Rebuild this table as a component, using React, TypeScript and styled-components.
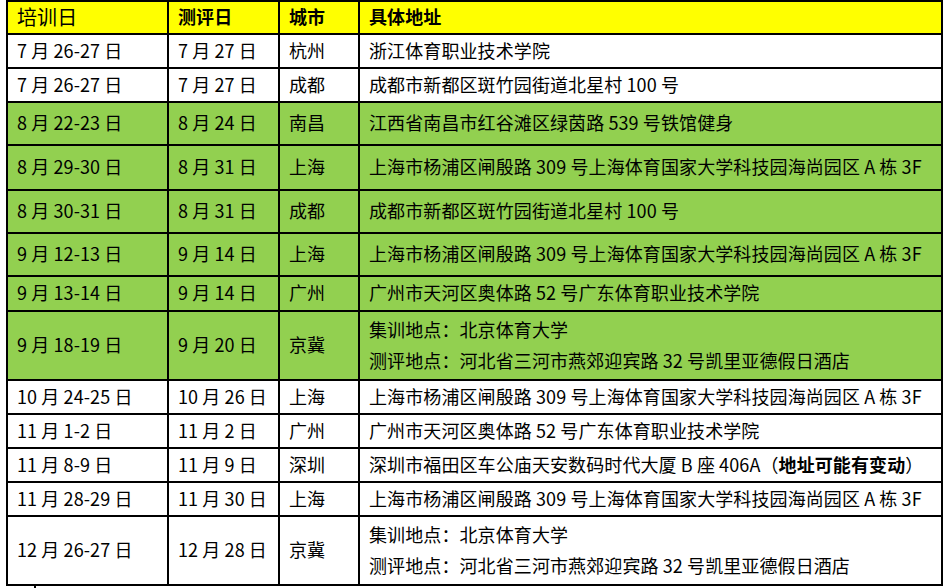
import React from "react";
import styled, { createGlobalStyle } from "styled-components";

const GlobalStyle = createGlobalStyle`
  html, body {
    margin: 0;
    padding: 0;
    background: #fff;
  }
  body {
    font-family: "Noto Sans CJK SC", "Noto Sans", sans-serif;
    color: #000;
  }
`;

const Page = styled.div`
  padding-left: 6px;
  width: 948px;
  height: 588px;
  box-sizing: border-box;
  overflow: hidden;
`;

const Table = styled.div`
  display: flex;
  flex-direction: column;
  width: 937px;
  box-sizing: border-box;
  border-top: 2px solid #000;
  border-left: 2px solid #000;
`;

const Row = styled.div<{ $h: number; $bg: string }>`
  display: grid;
  grid-template-columns: 161px 111px 80px 583px;
  height: ${(p) => p.$h}px;
  background: ${(p) => p.$bg};
`;

const Cell = styled.div`
  display: flex;
  flex-direction: column;
  justify-content: center;
  box-sizing: border-box;
  padding: 0 9px 2px;
  border-right: 2px solid #000;
  border-bottom: 2px solid #000;
  font-size: 18px;
  line-height: 31px;
  letter-spacing: 0.1px;
  white-space: nowrap;
  overflow: hidden;
`;

const HeadCell = styled(Cell)<{ $light?: boolean }>`
  font-size: ${(p) => (p.$light ? 20 : 18)}px;
  font-weight: ${(p) => (p.$light ? 400 : 700)};
`;

const Strong = styled.b`
  font-weight: 700;
`;

const Caret = styled.div`
  margin-left: 28px;
  width: 2px;
  height: 2px;
  background: #000;
`;

const WHITE = "#ffffff";
const GREEN = "#92d050";

type Item = {
  train: string;
  test: string;
  city: string;
  addr: React.ReactNode;
  h: number;
  green?: boolean;
};

const SH = "上海市杨浦区闸殷路 309 号上海体育国家大学科技园海尚园区 A 栋 3F";
const CD = "成都市新都区斑竹园街道北星村 100 号";
const GZ = "广州市天河区奥体路 52 号广东体育职业技术学院";
const JJ = (
  <>
    <span>集训地点：北京体育大学</span>
    <span>测评地点：河北省三河市燕郊迎宾路 32 号凯里亚德假日酒店</span>
  </>
);

const rows: Item[] = [
  { train: "7 月 26-27 日", test: "7 月 27 日", city: "杭州", addr: "浙江体育职业技术学院", h: 34 },
  { train: "7 月 26-27 日", test: "7 月 27 日", city: "成都", addr: CD, h: 34 },
  { train: "8 月 22-23 日", test: "8 月 24 日", city: "南昌", addr: "江西省南昌市红谷滩区绿茵路 539 号铁馆健身", h: 43, green: true },
  { train: "8 月 29-30 日", test: "8 月 31 日", city: "上海", addr: SH, h: 45, green: true },
  { train: "8 月 30-31 日", test: "8 月 31 日", city: "成都", addr: CD, h: 43, green: true },
  { train: "9 月 12-13 日", test: "9 月 14 日", city: "上海", addr: SH, h: 43, green: true },
  { train: "9 月 13-14 日", test: "9 月 14 日", city: "广州", addr: GZ, h: 35, green: true },
  { train: "9 月 18-19 日", test: "9 月 20 日", city: "京冀", addr: JJ, h: 69, green: true },
  { train: "10 月 24-25 日", test: "10 月 26 日", city: "上海", addr: SH, h: 34 },
  { train: "11 月 1-2 日", test: "11 月 2 日", city: "广州", addr: GZ, h: 34 },
  {
    train: "11 月 8-9 日",
    test: "11 月 9 日",
    city: "深圳",
    addr: (
      <span>
        深圳市福田区车公庙天安数码时代大厦 B 座 406A（<Strong>地址可能有变动</Strong>）
      </span>
    ),
    h: 34,
  },
  { train: "11 月 28-29 日", test: "11 月 30 日", city: "上海", addr: SH, h: 34 },
  { train: "12 月 26-27 日", test: "12 月 28 日", city: "京冀", addr: JJ, h: 69 },
];

export default function App() {
  return (
    <Page>
      <GlobalStyle />
      <Table>
        <Row $h={33} $bg="#ffff00">
          <HeadCell $light>培训日</HeadCell>
          <HeadCell>测评日</HeadCell>
          <HeadCell>城市</HeadCell>
          <HeadCell>具体地址</HeadCell>
        </Row>
        {rows.map((r, i) => (
          <Row key={i} $h={r.h} $bg={r.green ? GREEN : WHITE}>
            <Cell>{r.train}</Cell>
            <Cell>{r.test}</Cell>
            <Cell>{r.city}</Cell>
            <Cell>{r.addr}</Cell>
          </Row>
        ))}
      </Table>
      <Caret />
    </Page>
  );
}
